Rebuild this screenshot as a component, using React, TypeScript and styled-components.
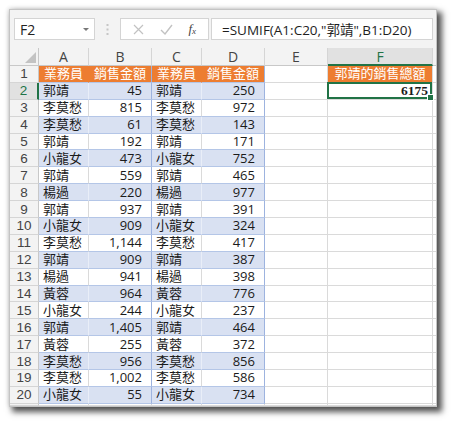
import React from "react";
import styled, { createGlobalStyle } from "styled-components";

type Tone = "orange" | "band" | "plain";
type Align = "left" | "right" | "center";

const GREEN = "#217346";
const ORANGE = "#ED7D31";
const BAND = "#D9E1F2";
const GRID = "#dadada";
const BLUE_LINE = "#9db3df";
const BAND_LINE = "#b4c6e7";

const TONES: Record<Tone, string> = {
    orange: ORANGE,
    band: BAND,
    plain: "#ffffff",
};

const GlobalStyle = createGlobalStyle`
    html, body {
        margin: 0;
        padding: 0;
        background: #ffffff;
    }
    body {
        font-family: "Open Sans", "Noto Sans CJK TC", sans-serif;
    }
`;

const Page = styled.div`
    box-sizing: border-box;
    width: 454px;
    height: 424px;
    padding: 9px 0 0 9px;
`;

const Window = styled.div`
    box-sizing: border-box;
    width: 428px;
    height: 398px;
    display: flex;
    flex-direction: column;
    overflow: hidden;
    background: #f3f3f3;
    border: 1px solid #c4c4c4;
    box-shadow: 4px 4px 6px 1px rgba(0, 0, 0, 0.68), -1px -1px 4px rgba(0, 0, 0, 0.12);
`;

const FormulaBar = styled.div`
    box-sizing: border-box;
    height: 38px;
    flex: none;
    display: flex;
    align-items: flex-start;
    padding: 8px 3px 0 4px;
`;

const Box = styled.div`
    box-sizing: border-box;
    height: 22px;
    background: #ffffff;
    border: 1px solid #d4d4d4;
    display: flex;
    align-items: center;
`;

const NameBox = styled(Box)`
    width: 81px;
    justify-content: space-between;
    padding: 0 5px 0 5px;
    font-size: 14px;
    color: #222;
`;

const Caret = styled.span`
    width: 0;
    height: 0;
    border-left: 3px solid transparent;
    border-right: 3px solid transparent;
    border-top: 3px solid #777;
    margin-top: 1px;
`;

const Grip = styled.div`
    width: 25px;
    height: 22px;
    display: flex;
    align-items: center;
    justify-content: center;
`;

const FxBox = styled(Box)`
    width: 89px;
    justify-content: space-around;
    padding: 0 4px;
`;

const FxLabel = styled.span`
    font-family: "Liberation Serif", serif;
    font-style: italic;
    font-size: 13px;
    color: #444;
    sub {
        font-size: 9px;
        vertical-align: -1px;
    }
`;

const FormulaInput = styled(Box)`
    flex: 1;
    margin-left: 2px;
    padding-left: 10px;
    font-size: 13.5px;
    color: #1e1e1e;
    white-space: nowrap;
`;

const Sheet = styled.div`
    flex: 1;
    display: grid;
    grid-template-columns: 29px 50px 63px 50px 63px 63px 105px 1fr;
    grid-template-rows: 18px repeat(20, 16.9px) 1fr;
    background: #ffffff;
    overflow: hidden;
`;

const HeadBase = styled.div<{ $active?: boolean }>`
    box-sizing: border-box;
    display: flex;
    align-items: center;
    justify-content: center;
    font-size: 14px;
    line-height: 15px;
    background: ${(p) => (p.$active ? "#e1e1e1" : "#f3f3f3")};
    color: ${(p) => (p.$active ? GREEN : "#444")};
`;

const ColHead = styled(HeadBase)`
    border-right: 1px solid #d5d5d5;
    border-bottom: ${(p) => (p.$active ? `2px solid ${GREEN}` : "1px solid #c8c8c8")};
`;

const RowHead = styled(HeadBase)`
    font-family: "Liberation Sans", sans-serif;
    font-size: 13.5px;
    border-bottom: 1px solid #d5d5d5;
    border-right: ${(p) => (p.$active ? `2px solid ${GREEN}` : "1px solid #c8c8c8")};
`;

const Corner = styled.div`
    box-sizing: border-box;
    position: relative;
    background: #f3f3f3;
    border-right: 1px solid #c8c8c8;
    border-bottom: 1px solid #c8c8c8;
    &::after {
        content: "";
        position: absolute;
        right: 2px;
        bottom: 2px;
        width: 11px;
        height: 11px;
        background: #c3c3c3;
        clip-path: polygon(100% 0, 100% 100%, 0 100%);
    }
`;

const Cell = styled.div<{ $tone: Tone; $align: Align; $rule: string; $line: string }>`
    box-sizing: border-box;
    position: relative;
    display: flex;
    align-items: center;
    justify-content: ${(p) =>
        p.$align === "left" ? "flex-start" : p.$align === "right" ? "flex-end" : "center"};
    padding: ${(p) => (p.$align === "left" ? "0 0 0 4px" : p.$align === "right" ? "0 9px 0 0" : "0")};
    background: ${(p) => TONES[p.$tone]};
    color: ${(p) => (p.$tone === "orange" ? "#ffffff" : "#1b1b1b")};
    border-right: 1px solid ${(p) => p.$rule};
    border-bottom: 1px solid ${(p) => p.$line};
    font-size: 13px;
    line-height: 15px;
    white-space: nowrap;
`;

const ActiveCell = styled(Cell)`
    padding-right: 4px;
    font-family: "Liberation Serif", serif;
    font-weight: 700;
    font-size: 13.5px;
`;

const Selection = styled.div`
    position: absolute;
    top: -1px;
    left: -1px;
    right: 0;
    bottom: 0;
    border: 2px solid ${GREEN};
    z-index: 2;
    pointer-events: none;
`;

const FillHandle = styled.div`
    position: absolute;
    right: -4px;
    bottom: -4px;
    width: 5px;
    height: 5px;
    background: ${GREEN};
    border: 1px solid #ffffff;
`;

const LETTERS = ["A", "B", "C", "D", "E", "F", ""];

const DATA: [string, string, string, string][] = [
    ["郭靖", "45", "郭靖", "250"],
    ["李莫愁", "815", "李莫愁", "972"],
    ["李莫愁", "61", "李莫愁", "143"],
    ["郭靖", "192", "郭靖", "171"],
    ["小龍女", "473", "小龍女", "752"],
    ["郭靖", "559", "郭靖", "465"],
    ["楊過", "220", "楊過", "977"],
    ["郭靖", "937", "郭靖", "391"],
    ["小龍女", "909", "小龍女", "324"],
    ["李莫愁", "1,144", "李莫愁", "417"],
    ["郭靖", "909", "郭靖", "387"],
    ["楊過", "941", "楊過", "398"],
    ["黃蓉", "964", "黃蓉", "776"],
    ["小龍女", "244", "小龍女", "237"],
    ["郭靖", "1,405", "郭靖", "464"],
    ["黃蓉", "255", "黃蓉", "372"],
    ["李莫愁", "956", "李莫愁", "856"],
    ["李莫愁", "1,002", "李莫愁", "586"],
    ["小龍女", "55", "小龍女", "734"],
];

const TableRow: React.FC<{ row: number }> = ({ row }) => {
    const inTable = row <= 20;
    const header = row === 1;
    const values = header
        ? ["業務員", "銷售金額", "業務員", "銷售金額"]
        : inTable
          ? DATA[row - 2]
          : ["", "", "", ""];
    const tone: Tone = header ? "orange" : inTable && row % 2 === 0 ? "band" : "plain";
    const innerRule = tone === "orange" ? ORANGE : tone === "band" ? "#e9eef8" : GRID;
    const line = inTable ? BAND_LINE : GRID;

    return (
        <>
            {/* the row below 20 only peeks out by a few pixels, so no number */}
            <RowHead $active={row === 2}>{inTable ? row : ""}</RowHead>
            {values.map((v, i) => {
                const isName = i % 2 === 0;
                const align: Align = header ? "center" : isName ? "left" : "right";
                const rule = !inTable ? GRID : isName ? innerRule : BLUE_LINE;
                return (
                    <Cell key={i} $tone={tone} $align={align} $rule={rule} $line={line}>
                        {v}
                    </Cell>
                );
            })}
            <Cell $tone="plain" $align="left" $rule={GRID} $line={GRID} />
            {row === 1 ? (
                <Cell $tone="orange" $align="center" $rule={GRID} $line={GRID}>
                    郭靖的銷售總額
                </Cell>
            ) : row === 2 ? (
                <ActiveCell $tone="plain" $align="right" $rule={GRID} $line={GRID}>
                    6175
                    <Selection>
                        <FillHandle />
                    </Selection>
                </ActiveCell>
            ) : (
                <Cell $tone="plain" $align="left" $rule={GRID} $line={GRID} />
            )}
            <Cell $tone="plain" $align="left" $rule={GRID} $line={GRID} />
        </>
    );
};

const App: React.FC = () => {
    return (
        <Page>
            <GlobalStyle />
            <Window>
                <FormulaBar>
                    <NameBox>
                        F2
                        <Caret />
                    </NameBox>
                    <Grip>
                        <svg width="3" height="11" viewBox="0 0 3 11">
                            <rect x="0.5" y="0" width="2" height="2" fill="#c6c6c6" />
                            <rect x="0.5" y="4.5" width="2" height="2" fill="#c6c6c6" />
                            <rect x="0.5" y="9" width="2" height="2" fill="#c6c6c6" />
                        </svg>
                    </Grip>
                    <FxBox>
                        <svg width="11" height="11" viewBox="0 0 11 11">
                            <path d="M1 1 L10 10 M10 1 L1 10" stroke="#c2c2c2" strokeWidth="1.2" />
                        </svg>
                        <svg width="13" height="11" viewBox="0 0 13 11">
                            <path d="M1 6 L5 10 L12 1" stroke="#c2c2c2" strokeWidth="1.4" fill="none" />
                        </svg>
                        <FxLabel>
                            f<sub>x</sub>
                        </FxLabel>
                    </FxBox>
                    <FormulaInput>=SUMIF(A1:C20,"郭靖",B1:D20)</FormulaInput>
                </FormulaBar>
                <Sheet>
                    <Corner />
                    {LETTERS.map((l, i) => (
                        <ColHead key={i} $active={l === "F"}>
                            {l}
                        </ColHead>
                    ))}
                    {Array.from({ length: 21 }, (_, i) => (
                        <TableRow key={i} row={i + 1} />
                    ))}
                </Sheet>
            </Window>
        </Page>
    );
};

export default App;
